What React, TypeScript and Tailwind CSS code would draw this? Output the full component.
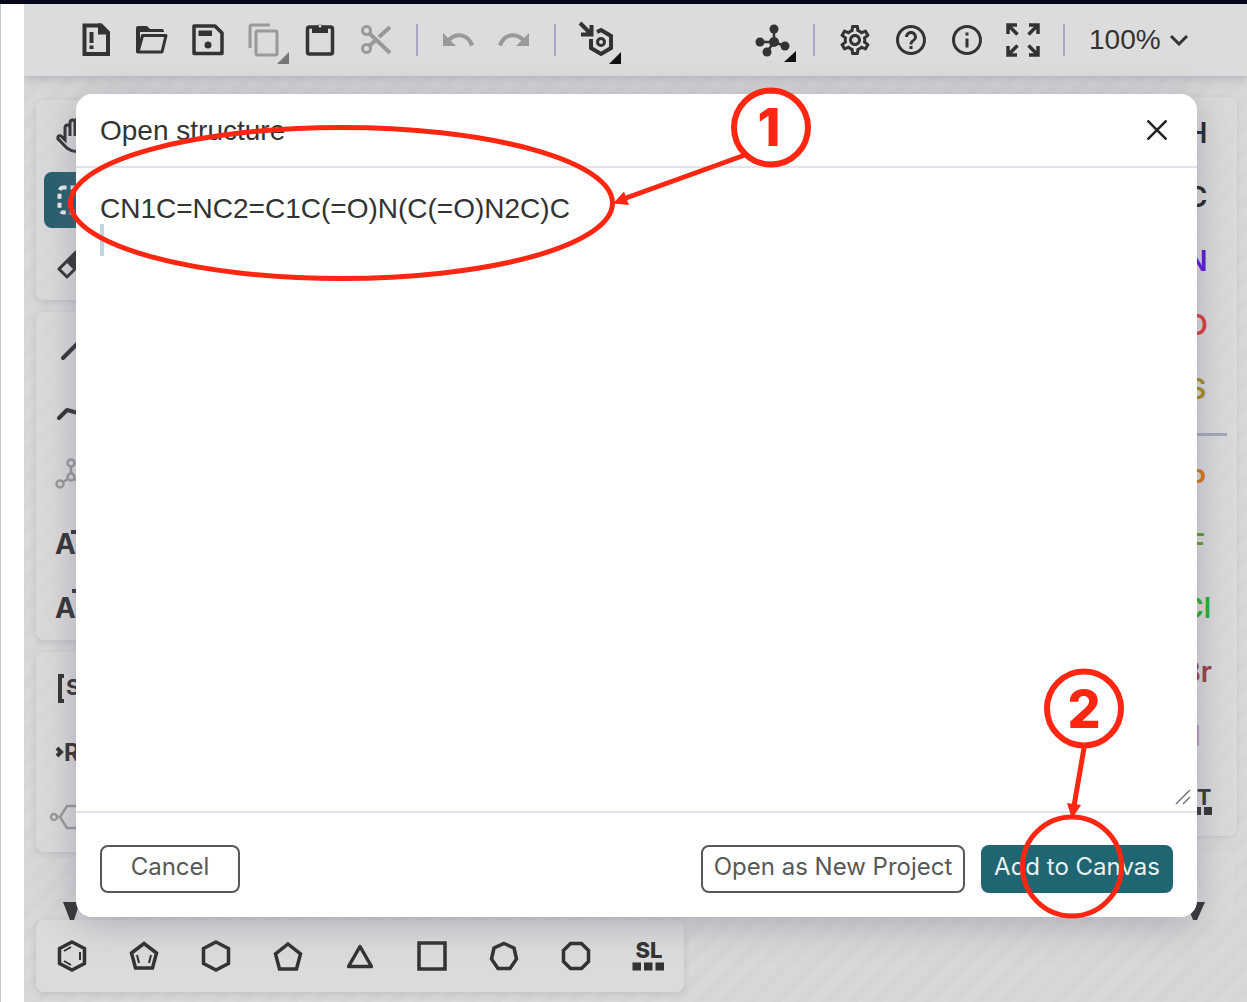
import { ReactNode, useState } from 'react'
import clsx from 'clsx'
import { MdHelpOutline, MdInfoOutline, MdOutlineSettings } from 'react-icons/md'

type IconProps = { children: ReactNode, className?: string }

// every icon is drawn around 0,0 in the middle of its button
const Icon = ({ children, className }: IconProps) => (
    <svg
        className={clsx('size-9 shrink-0 overflow-visible', className)}
        viewBox="-18 -18 36 36"
        fill="none"
        stroke="currentColor"
        strokeWidth="4"
        aria-hidden="true">
        {children}
    </svg>
)

type ToolProps = { label: string, children: ReactNode, className?: string, disabled?: boolean }

const Tool = ({ label, children, className, disabled }: ToolProps) => (
    <button
        type="button"
        aria-label={label}
        disabled={disabled}
        className={clsx('flex h-14 w-14 shrink-0 items-center justify-center rounded-lg', disabled ? 'text-[#999999]' : 'text-[#333333]', className)}>
        {children}
    </button>
)

const Divider = () => <div className="mx-3 h-8 w-0.5 shrink-0 bg-[#a9a5c4]"></div>

const Panel = ({ children, className }: { children?: ReactNode, className?: string }) => (
    <div className={clsx('flex flex-col gap-2 rounded-lg bg-[#dcdcdc]/60 p-2', className)}>
        {children}
    </div>
)

const TopToolbar = () => {
    const [zoom, setZoom] = useState('100%')
    return (
        <header className="flex h-18 items-center bg-[#dcdcdc] pl-11 pr-[54px] shadow-[0_2px_10px_rgba(103,104,132,0.35)]">
            <Tool label="Clear canvas">
                <Icon>
                    <path d="M-11.5 -14.5H5L12 -7.5V14H-11.5Z" />
                    <path d="M2 -16.5H5L14 -7.5V-5.5H2Z" fill="currentColor" stroke="none" />
                    <path d="M-4.5 -8V3M-4.5 5.5V9" />
                </Icon>
            </Tool>
            <Tool label="Open">
                <Icon>
                    <path d="M-16 13V-12Q-16 -14 -14 -14H-5L-2 -11H10Q12 -11 12 -8H-12V10Z" fill="currentColor" stroke="none" />
                    <path d="M-9.5 -4.5H14L10 12H-14Z" strokeWidth="3" strokeLinejoin="round" />
                </Icon>
            </Tool>
            <Tool label="Save">
                <Icon>
                    <path d="M-14 -14H7L14 -7V13.500H-14Z" strokeWidth="3.5" strokeLinejoin="round" />
                    <path d="M-9.5 -9.5H4V-4H-9.5Z" fill="currentColor" stroke="none" />
                    <circle cx="0" cy="5" r="3.5" fill="currentColor" stroke="none" />
                </Icon>
            </Tool>
            <Tool label="Copy" disabled>
                <Icon>
                    <path d="M-14 8V-13Q-14 -15 -12 -15H6" strokeWidth="3" />
                    <rect x="-8" y="-9" width="21" height="24" rx="1.5" strokeWidth="3" />
                    <path d="M25 12V24H13Z" fill="#777777" stroke="none" />
                </Icon>
            </Tool>
            <Tool label="Paste">
                <Icon>
                    <rect x="-12.5" y="-13" width="25" height="27" rx="2" strokeWidth="3.5" />
                    <path d="M-8 -13H-4A4.500 4.500 0 0 1 4 -13H8V-7H-8Z" fill="currentColor" stroke="none" />
                    <circle cx="0" cy="-14" r="1.5" fill="#dcdcdc" stroke="none" />
                </Icon>
            </Tool>
            <Tool label="Cut" disabled>
                <Icon>
                    <circle cx="-9.5" cy="-9.5" r="4" strokeWidth="3" />
                    <circle cx="-9.5" cy="8.5" r="4" strokeWidth="3" />
                    <path d="M-7 -7L14 13M-7 6L0 0M3 -3L14 -13" />
                </Icon>
            </Tool>
            <Divider />
            <Tool label="Undo" disabled>
                <Icon>
                    <path d="M-15 -7V6H-2Z" fill="currentColor" stroke="none" />
                    <path d="M-9.5 0C-1 -8 10 -6 14 5.500" />
                </Icon>
            </Tool>
            <Tool label="Redo" disabled>
                <Icon>
                    <path d="M15 -7V6H2Z" fill="currentColor" stroke="none" />
                    <path d="M9.5 0C1 -8 -10 -6 -14 5.500" />
                </Icon>
            </Tool>
            <Divider />
            <Tool label="Layout">
                <Icon>
                    <path d="M-16 -17L-5 -6M-4.5 -15V-5.500H-15" />
                    <path d="M1 -8L5 -10L15 -4V8L5 14L-5 8V-1" />
                    <circle cx="5" cy="2" r="3.5" strokeWidth="3" />
                    <path d="M25 12V24H13Z" fill="#111111" stroke="none" />
                </Icon>
            </Tool>
            <Tool label="3D viewer" className="ml-auto">
                <Icon>
                    <path d="M1 2V-11M1 2H-13M1 2L12 6M1 2L-6 12" strokeWidth="2.5" />
                    <g fill="currentColor" stroke="none">
                        <circle cx="1" cy="2" r="5" />
                        <circle cx="1" cy="-11" r="4.5" />
                        <circle cx="-13" cy="2" r="4.5" />
                        <circle cx="12" cy="6" r="4.5" />
                        <circle cx="-6" cy="12" r="4.5" />
                    </g>
                    <path d="M23 11V22H11Z" fill="#111111" stroke="none" />
                </Icon>
            </Tool>
            <Divider />
            <Tool label="Settings"><MdOutlineSettings className="size-9" /></Tool>
            <Tool label="Help"><MdHelpOutline className="size-9" /></Tool>
            <Tool label="About"><MdInfoOutline className="size-9" /></Tool>
            <Tool label="Fullscreen">
                <Icon>
                    <g strokeWidth="3.5">
                        <path d="M-15 -6V-15H-6M15 -6V-15H6M-15 6V15H-6M15 6V15H6" />
                        <path d="M-14 -14L-5.500 -5.500M14 -14L5.500 -5.500M-14 14L-5.500 5.500M14 14L5.500 5.500" />
                    </g>
                </Icon>
            </Tool>
            <Divider />
            <div className="relative ml-3 flex items-center text-[#333333]">
                <select
                    aria-label="Zoom"
                    value={zoom}
                    onChange={(e) => setZoom(e.target.value)}
                    className="w-26 appearance-none bg-transparent font-['Liberation_Sans'] text-[28px] leading-8">
                    <option>50%</option>
                    <option>100%</option>
                    <option>200%</option>
                </select>
                <svg className="pointer-events-none absolute right-1 h-3 w-5" viewBox="0 0 20 12" fill="none" stroke="currentColor" strokeWidth="3" aria-hidden="true">
                    <path d="M2 2L10 10L18 2" />
                </svg>
            </div>
        </header>
    )
}

const LeftTools = () => (
    <div className="flex w-20 flex-col gap-3 pt-6">
        <Panel className="shadow-[0_2px_6px_rgba(103,104,132,0.2)]">
            <Tool label="Hand">
                <Icon>
                    <path
                        d="M4 15.500C-6 14.500 -8 8 -14 3Q-15 -1 -11 0L-7 4V-8Q-7 -11 -4.500 -11Q-2 -11 -2 -8V0M-2 -8V-13Q-2 -16 0.500 -16Q3 -16 3 -13V0M3 -13Q3 -17 6 -17Q8 -17 8 -13V0M8 -10Q13 -12 13 -7V4Q13 15 4 15.500"
                        strokeWidth="3" />
                </Icon>
            </Tool>
            <Tool label="Select" className="bg-[#2a5f6c]">
                <Icon>
                    <rect x="-12.5" y="-12.5" width="25" height="25" rx="4" stroke="#ececec" strokeDasharray="5 4" strokeDashoffset="2" />
                </Icon>
            </Tool>
            <Tool label="Erase">
                <Icon>
                    <path d="M-13 5L4 -12L12 -4L-5 13Z" strokeWidth="3" strokeLinejoin="round" />
                    <path d="M-6 -2L4 -12L12 -4L2 6Z" fill="currentColor" stroke="none" />
                </Icon>
            </Tool>
        </Panel>
        <Panel className="shadow-[0_2px_6px_rgba(103,104,132,0.2)]">
            <Tool label="Single bond"><Icon><path d="M-9 10L10 -9" strokeLinecap="round" /></Icon></Tool>
            <Tool label="Chain"><Icon><path d="M-13 6L-5 -2L6 1L14 -6" strokeLinecap="round" strokeLinejoin="round" /></Icon></Tool>
            <Tool label="Stereochemistry" disabled>
                <Icon>
                    <g strokeWidth="2.5">
                        <circle cx="-12" cy="8" r="3.5" />
                        <circle cx="-1" cy="-13" r="3.5" />
                        <circle cx="-1" cy="1" r="3.5" />
                        <circle cx="11" cy="8" r="3.5" />
                        <path d="M-9 6L-4 3M-1 -9V-3M2 3L8 6" />
                    </g>
                </Icon>
            </Tool>
            <Tool label="Charge minus">
                <Icon>
                    <text x="-17" y="14" fill="currentColor" stroke="none" className="font-['Inter'] text-[28px] font-bold">A</text>
                    <path d="M-1 -8H10" />
                </Icon>
            </Tool>
            <Tool label="Charge plus">
                <Icon>
                    <text x="-17" y="14" fill="currentColor" stroke="none" className="font-['Inter'] text-[28px] font-bold">A</text>
                    <path d="M0 -13H14M7 -20V-6" />
                </Icon>
            </Tool>
        </Panel>
        <Panel className="shadow-[0_2px_6px_rgba(103,104,132,0.2)]">
            <Tool label="S-Group">
                <Icon>
                    <path d="M-8 -12H-12V13H-8" />
                    <text x="-6" y="7" fill="currentColor" stroke="none" className="font-['Inter'] text-[22px] font-bold">S</text>
                </Icon>
            </Tool>
            <Tool label="R-Group">
                <Icon>
                    <path d="M-15 -4L-11 0L-15 4" />
                    <text x="-8" y="9" fill="currentColor" stroke="none" className="font-['Inter'] text-[24px] font-bold">R</text>
                </Icon>
            </Tool>
            <Tool label="Create monomer" disabled>
                <Icon>
                    <circle cx="-18" cy="1" r="3" strokeWidth="2.5" />
                    <path d="M-12 1L-5 -10H6L12 1L6 12H-5ZM-15 1H-12" strokeWidth="2.5" />
                </Icon>
            </Tool>
        </Panel>
        <div className="flex flex-1 items-end justify-center pr-2">
            <svg className="h-5 w-5" viewBox="0 0 20 20" fill="#333333" aria-hidden="true"><path d="M1 2H18L12 20H8Z" /></svg>
        </div>
    </div>
)

const atoms = [
    { symbol: 'H', color: 'text-[#222222]' },
    { symbol: 'C', color: 'text-[#222222]' },
    { symbol: 'N', color: 'text-[#5a12d6]' },
    { symbol: 'O', color: 'text-[#dc3a32]' },
    { symbol: 'S', color: 'text-[#a58a17]' },
]

const moreAtoms = [
    { symbol: 'P', color: 'text-[#d9730d]' },
    { symbol: 'F', color: 'text-[#5f9f1c]' },
    { symbol: 'Cl', color: 'text-[#1fb41f]' },
    { symbol: 'Br', color: 'text-[#963c3c]' },
    { symbol: 'I', color: 'text-[#b78fbf]' },
]

const Atom = ({ symbol, color }: { symbol: string, color: string }) => (
    <button type="button" className={clsx("h-14 font-['Inter'] text-[28px] font-semibold", color)}>{symbol}</button>
)

const RightTools = () => (
    <div className="mr-2.5 flex w-20 flex-col gap-4 pt-[21px]">
        <Panel className="shadow-[0_1px_4px_rgba(103,104,132,0.15)]">
            {atoms.map((atom) => <Atom key={atom.symbol} {...atom} />)}
            <div className="my-2 mr-0.5 h-[3px] bg-[#a3a8b8]"></div>
            {moreAtoms.map((atom) => <Atom key={atom.symbol} {...atom} />)}
            <Tool label="Periodic table" className="self-center">
                <Icon>
                    <text x="0" y="5" textAnchor="middle" fill="currentColor" stroke="none" className="font-['Inter'] text-[22px] font-bold">PT</text>
                    <path d="M-15 11H-7M-4 11H4M7 11H15" strokeWidth="8" />
                </Icon>
            </Tool>
        </Panel>
        <div className="mr-1 flex flex-1 items-end justify-center rounded-lg bg-[#dcdcdc]/60">
            <svg className="h-5 w-5" viewBox="0 0 20 20" fill="#333333" aria-hidden="true"><path d="M1 2H20L12 20H8Z" /></svg>
        </div>
    </div>
)

const Templates = () => (
    <div className="ml-3 flex self-start rounded-lg bg-[#dddddd]/70 py-2 shadow-[0_2px_6px_rgba(103,104,132,0.2)]">
        <Tool label="Benzene" className="mx-2">
            <Icon>
                <path d="M0 -14L12.500 -7.500V7.500L0 14L-12.500 7.500V-7.500Z" strokeWidth="3.5" />
                <path d="M-8 -5L-1 -9M-8 5L-1 9M8 -4V4" strokeWidth="2" />
            </Icon>
        </Tool>
        <Tool label="Cyclopentadiene" className="mx-2">
            <Icon>
                <path d="M0 -12.500L12.500 -3L8.500 12H-8.500L-12.500 -3Z" strokeWidth="3.5" />
                <path d="M-7 -1L-5 7M7 -1L5 7" strokeWidth="2" />
            </Icon>
        </Tool>
        <Tool label="Cyclohexane" className="mx-2"><Icon><path d="M0 -14L12.500 -7.500V7.500L0 14L-12.500 7.500V-7.500Z" strokeWidth="3.5" /></Icon></Tool>
        <Tool label="Cyclopentane" className="mx-2"><Icon><path d="M0 -12L12.500 -2L8.500 13H-8.500L-12.500 -2Z" strokeWidth="3.5" /></Icon></Tool>
        <Tool label="Cyclopropane" className="mx-2"><Icon><path d="M0 -9.500L11.500 10.500H-11.500Z" strokeWidth="3.5" strokeLinejoin="round" /></Icon></Tool>
        <Tool label="Cyclobutane" className="mx-2"><Icon><path d="M-13 -13H13V13H-13Z" strokeWidth="3.5" /></Icon></Tool>
        <Tool label="Cycloheptane" className="mx-2"><Icon><path d="M0 -12.500L10 -8L12.500 3L6 12.500H-6L-12.500 3L-10 -8Z" strokeWidth="3.5" /></Icon></Tool>
        <Tool label="Cyclooctane" className="mx-2"><Icon><path d="M-5.500 -12.500H5.500L12.500 -5.500V5.500L5.500 12.500H-5.500L-12.500 5.500V-5.500Z" strokeWidth="3.5" /></Icon></Tool>
        <Tool label="Structure library" className="mx-2">
            <Icon>
                <text x="1" y="2" textAnchor="middle" fill="currentColor" stroke="none" className="font-['Inter'] text-[22px] font-extrabold">SL</text>
                <path d="M-15.500 10.500H-7M-4 10.500H4.500M7.500 10.500H16" strokeWidth="8" />
            </Icon>
        </Tool>
    </div>
)

const OpenDialog = () => {
    const [structure, setStructure] = useState('CN1C=NC2=C1C(=O)N(C(=O)N2C)C\n')
    return (
        <div
            role="dialog"
            aria-labelledby="dialog-title"
            className="flex flex-1 flex-col rounded-2xl bg-white font-['Liberation_Sans'] text-[#333333] shadow-[0_6px_36px_rgba(103,100,132,0.4)]">
            <div className="flex h-18 items-center justify-between px-6">
                <h1 id="dialog-title" className="pt-0.5 text-[28px] leading-8">Open structure</h1>
                <button type="button" aria-label="Close" className="mr-1.5">
                    <svg className="size-5" viewBox="0 0 20 20" fill="none" stroke="#222222" strokeWidth="2.5" aria-hidden="true">
                        <path d="M0.500 0.500L19.500 19.500M19.500 0.500L0.500 19.500" />
                    </svg>
                </button>
            </div>
            <div className="relative flex flex-1 border-y-2 border-[#e0e3ec]">
                <textarea
                    aria-labelledby="dialog-title"
                    spellCheck={false}
                    value={structure}
                    onChange={(e) => setStructure(e.target.value)}
                    className="flex-1 resize-none px-6 pb-6 pt-[25px] text-[28px] leading-8 outline-none" />
                <span className="absolute left-6 top-14 h-8 w-1 bg-[#c1d6dc]"></span>
                <svg className="absolute bottom-1.5 right-1.5 size-4" viewBox="0 0 16 16" stroke="#777777" strokeWidth="1.5" aria-hidden="true">
                    <path d="M1 15L15 1M8 15L15 8" />
                </svg>
            </div>
            <div className="flex items-center gap-4 px-6 pb-6 pt-8 font-['Inter'] text-[24px] text-[#585858]">
                <button type="button" className="mr-auto h-12 w-35 rounded-lg border-2 border-[#585858] pb-1">Cancel</button>
                <button type="button" className="h-12 w-66 rounded-lg border-2 border-[#585858] pb-1">Open as New Project</button>
                <button type="button" className="h-12 w-48 rounded-lg bg-[#1f6672] pb-1 text-[#e9f0f1]">Add to Canvas</button>
            </div>
        </div>
    )
}

// numbered callouts lying over the whole window
const Callouts = () => (
    <svg className="pointer-events-none absolute left-0 top-0 h-[1002px] w-[1247px]" viewBox="0 0 1247 1002" fill="none" stroke="#ff2712" aria-hidden="true">
        <ellipse cx="341.5" cy="203" rx="271" ry="75.5" strokeWidth="5" />
        <circle cx="771" cy="127.5" r="37" strokeWidth="6" />
        <path d="M745 155L626 198" strokeWidth="5" />
        <path d="M613 203.500L624 191.500L629 205Z" fill="#ff2712" stroke="none" />
        <circle cx="1084" cy="708.5" r="37" strokeWidth="6" />
        <path d="M1084 748L1074 806" strokeWidth="5" />
        <path d="M1072 819L1067 803L1081 805Z" fill="#ff2712" stroke="none" />
        <circle cx="1072" cy="866.5" r="49.5" strokeWidth="5" />
        <g fill="#ff2712" stroke="none" textAnchor="middle" className="font-['Inter'] text-[52px] font-extrabold">
            <text x="769" y="146">1</text>
            <text x="1084" y="728">2</text>
        </g>
    </svg>
)

export default function App() {
    return (
        <div className="relative flex min-h-screen flex-col overflow-hidden bg-white">
            <div className="h-1 bg-[#05051c]"></div>
            <div className="flex flex-1 border-l border-[#c3c3cd]">
                <div className="w-[23px] shrink-0"></div>
                <main className="relative flex flex-1 flex-col overflow-hidden bg-[repeating-linear-gradient(135deg,#d8d8d8_0px,#d8d8d8_8px,#d5d5d5_10px,#d5d5d5_16px,#d8d8d8_18px)]">
                    <TopToolbar />
                    <div className="flex flex-1 justify-between pl-3">
                        <LeftTools />
                        <RightTools />
                    </div>
                    <div className="flex pb-2.5">
                        <Templates />
                    </div>
                    <div className="absolute inset-0 flex pb-[85px] pl-13 pr-[50px] pt-[90px]">
                        <OpenDialog />
                    </div>
                </main>
            </div>
            <Callouts />
        </div>
    )
}
